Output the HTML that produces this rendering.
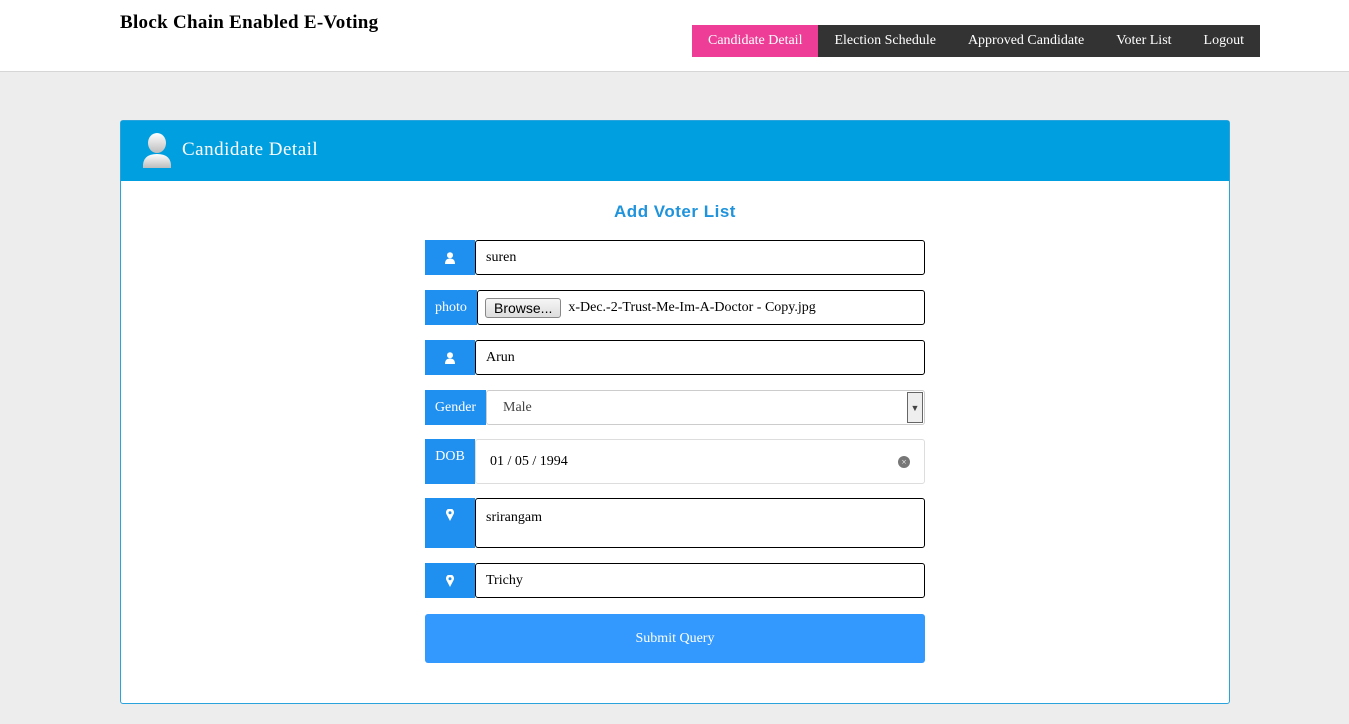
<!DOCTYPE html>
<html><head><style>
*{box-sizing:border-box;margin:0;padding:0}
body{width:1349px;height:724px;background:#ededed;font-family:"Liberation Serif",serif;position:relative;overflow:hidden}
.hdr{position:absolute;left:0;top:0;width:1349px;height:72px;background:#fff;border-bottom:1px solid #d6d6d6}
.logo{position:absolute;left:120px;top:12px;font-size:19px;font-weight:bold;color:#000;letter-spacing:0.3px}
.nav{position:absolute;left:692px;top:25px;height:32px;display:flex;background:#333}
.nav div{color:#fff;font-size:14px;line-height:32px;padding:0 16px}
.nav .a{background:#ee3d96}
.card{position:absolute;left:120px;top:120px;width:1110px;height:584px;background:#fff;border:1px solid #2aa2dc;border-radius:3px}
.ch{height:60px;background:#009fe0;position:relative}
.ch span{position:absolute;left:61px;top:18px;color:#fff;font-size:19px;letter-spacing:0.5px}
h3{position:absolute;left:0;width:1108px;top:80px;text-align:center;color:#1f93db;font:bold 17px "Liberation Sans",sans-serif;letter-spacing:0.5px}
.row{position:absolute;left:304px;width:500px;display:flex}
.lab{background:#1f8ff0;color:#fff;font-size:14px;display:flex;align-items:center;justify-content:center;width:50px;flex:none}
.inp{flex:1;border:1px solid #000;border-radius:3px;font-size:14px;padding-left:10px;display:flex;align-items:center;background:#fff}
.btn{position:absolute;left:304px;top:493px;width:500px;height:49px;background:#3399ff;border-radius:3px;color:#fff;font-size:14px;text-align:center;line-height:49px}
</style></head><body>
<div class="hdr"><div class="logo">Block Chain Enabled E-Voting</div>
<div class="nav"><div class="a">Candidate Detail</div><div>Election Schedule</div><div>Approved Candidate</div><div>Voter List</div><div>Logout</div></div></div>
<div class="card">
<div class="ch"><svg style="position:absolute;left:20px;top:11px" width="32" height="38" viewBox="0 0 32 38"><defs><linearGradient id="g" x1="0" y1="0" x2="0" y2="1"><stop offset="0" stop-color="#fff"/><stop offset="1" stop-color="#bdbdbd"/></linearGradient></defs><ellipse cx="16" cy="11" rx="9" ry="10" fill="url(#g)"/><path d="M2 36 Q1 22 16 22 Q31 22 30 36 Z" fill="url(#g)"/></svg><span>Candidate Detail</span></div>
<h3 style="top:81px">Add Voter List</h3>
<div class="row" style="top:119px;height:35px"><div class="lab"><svg width="10" height="12" viewBox="0 0 10 12"><circle cx="5" cy="3.2" r="3" fill="#fff"/><path d="M0 12 Q0 6.5 5 6.5 Q10 6.5 10 12Z" fill="#fff"/></svg></div><div class="inp">suren</div></div>
<div class="row" style="top:169px;height:35px"><div class="lab" style="width:52px">photo</div><div class="inp" style="padding-left:7px"><span style="font:14px 'Liberation Sans',sans-serif;border:1px solid #888;border-radius:3px;background:linear-gradient(#f6f6f6,#ddd);padding:1px 8px">Browse...</span>&nbsp;&nbsp;x-Dec.-2-Trust-Me-Im-A-Doctor - Copy.jpg</div></div>
<div class="row" style="top:219px;height:35px"><div class="lab"><svg width="10" height="12" viewBox="0 0 10 12"><circle cx="5" cy="3.2" r="3" fill="#fff"/><path d="M0 12 Q0 6.5 5 6.5 Q10 6.5 10 12Z" fill="#fff"/></svg></div><div class="inp">Arun</div></div>
<div class="row" style="top:269px;height:35px"><div class="lab" style="width:61px">Gender</div><div class="inp" style="border-color:#ccc;padding-left:16px;color:#444;justify-content:space-between;padding-right:1px">Male<span style="width:16px;height:31px;border:1px solid #666;background:#eee;font-size:9px;text-align:center;line-height:31px">&#9660;</span></div></div>
<div class="row" style="top:318px;height:45px"><div class="lab" style="align-items:flex-start;padding-top:10px">DOB</div><div class="inp" style="border-color:#ddd;padding-left:14px;justify-content:space-between;padding-right:14px">01 / 05 / 1994<span style="width:12px;height:12px;border-radius:50%;background:#777;color:#fff;font-size:9px;text-align:center;line-height:12px">×</span></div></div>
<div class="row" style="top:377px;height:50px"><div class="lab" style="align-items:flex-start;padding-top:11px"><svg width="8" height="12" viewBox="0 0 8 12"><path d="M4 12 L0.6 5.5 A4 4 0 1 1 7.4 5.5Z M4 2.3 A1.5 1.5 0 1 0 4 5.3 A1.5 1.5 0 1 0 4 2.3Z" fill="#fff" fill-rule="evenodd"/></svg></div><div class="inp" style="align-items:flex-start;padding-top:11px">srirangam</div></div>
<div class="row" style="top:442px;height:35px"><div class="lab"><svg width="8" height="12" viewBox="0 0 8 12"><path d="M4 12 L0.6 5.5 A4 4 0 1 1 7.4 5.5Z M4 2.3 A1.5 1.5 0 1 0 4 5.3 A1.5 1.5 0 1 0 4 2.3Z" fill="#fff" fill-rule="evenodd"/></svg></div><div class="inp">Trichy</div></div>
<div class="btn">Submit Query</div>
</div>
</body></html>
